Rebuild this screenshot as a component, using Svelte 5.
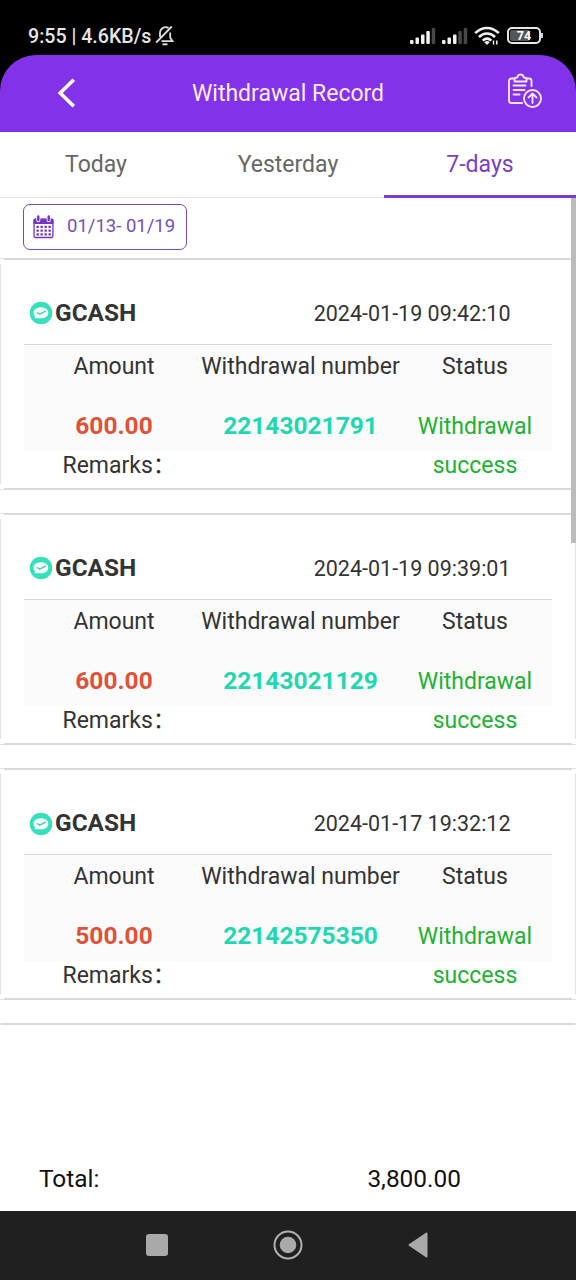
<script>
  let activeTab = '7-days';

  const tabs = ['Today', 'Yesterday', '7-days'];

  const records = [
    { date: '2024-01-19 09:42:10', amount: '600.00', number: '22143021791' },
    { date: '2024-01-19 09:39:01', amount: '600.00', number: '22143021129' },
    { date: '2024-01-17 19:32:12', amount: '500.00', number: '22142575350' }
  ];
</script>

<div class="screen">
  <div class="statusbar">
    <span class="clock">9:55 | 4.6KB/s</span>
    <svg class="bell" width="20" height="22" viewBox="0 0 20 22" fill="none" stroke="#ddd" stroke-width="1.8">
      <path d="M13.500 3C11 1 5.500 2.500 5 7.500V12M6.500 16.200h11l-2.300-3.500V7.500M1.200 17.500L16.800 1.500" />
      <path d="M7.500 19.300h5" stroke-width="2" />
    </svg>
    <div class="indicators">
      <svg width="26" height="18" viewBox="0 0 26 18" fill="#f2f2f2">
        <rect x="0" y="13" width="3.500" height="4" rx="1" />
        <rect x="5.500" y="10.500" width="3.500" height="6.500" rx="1" />
        <rect x="11" y="7.500" width="3.500" height="9.500" rx="1" />
        <rect x="16.300" y="4" width="3.500" height="13" rx="1" />
        <rect x="21.700" y="1" width="3.500" height="16" rx="1" fill="#484848" />
      </svg>
      <svg width="26" height="18" viewBox="0 0 26 18" fill="#f2f2f2">
        <rect x="0" y="13" width="3.500" height="4" rx="1" />
        <rect x="5.500" y="10.500" width="3.500" height="6.500" rx="1" />
        <rect x="11" y="7.500" width="3.500" height="9.500" rx="1" />
        <rect x="16.300" y="4" width="3.500" height="13" rx="1" fill="#484848" />
        <rect x="21.700" y="1" width="3.500" height="16" rx="1" fill="#484848" />
      </svg>
      <svg width="26" height="20" viewBox="0 0 26 20" fill="none" stroke="#f2f2f2" stroke-width="2.600">
        <path d="M1.200 7.200C8 .2 18 .2 24.800 7.200M5 11c4.500-4.600 11.500-4.600 16 0M8.700 14.600c2.600-2.400 6-2.400 8.600 0" />
        <path d="M10.200 16.200q2.800-2.400 5.600 0L13 19z" fill="#f2f2f2" stroke="none" />
        <path d="M19.500 18.500v-4M22.800 14.500v4" stroke-width="1.500" />
      </svg>
      <div class="battery"><span>74</span></div>
    </div>
  </div>

  <header class="header">
    <button class="back" aria-label="Back">
      <svg width="20" height="30" viewBox="0 0 20 30" fill="none" stroke="#fff" stroke-width="3.600">
        <path d="M17.800 1.800L4.200 15l13.600 13.200" />
      </svg>
    </button>
    <h1>Withdrawal Record</h1>
    <button class="export" aria-label="Submit record">
      <svg width="36" height="36" viewBox="0 0 36 36" fill="none" stroke="#fbe3ff" stroke-width="1.900" stroke-linecap="round" stroke-linejoin="round">
        <path d="M15 30H4.500Q2 30 2 27.500V8q0-2.500 2.500-2.500H7.500M19.500 5.500H22q2.500 0 2.500 2.500v5" />
        <path d="M7.500 8.500V6q0-1.500 2.800-1.500Q10.700 1.500 13.500 1.500t3.200 3q2.800 0 2.800 1.500v2.500z" />
        <path d="M6.500 12.500h12M6.500 17h11M6.500 21.500h6" />
        <circle cx="25.500" cy="25.500" r="8.500" />
        <path d="M25.500 30v-9M21.500 24.500l4-4 4 4" />
      </svg>
    </button>
  </header>

  <nav class="tabs">
    {#each tabs as tab}
      <button class="tab {activeTab === tab ? 'is-active' : ''}" on:click={() => (activeTab = tab)}>{tab}</button>
    {/each}
  </nav>

  <main class="content">
    <div class="filter">
      <button class="range">
        <svg width="21" height="24" viewBox="0 0 21 24">
          <path d="M2 3.500h17q1.500 0 1.500 1.500v4H.5V5q0-1.500 1.500-1.500z" fill="#7335c9" />
          <rect x="1.100" y="4.500" width="18.800" height="18" rx="1.200" fill="none" stroke="#7335c9" stroke-width="1.300" />
          <path d="M5.300 1.200v4M15.700 1.200v4" stroke="#fff" stroke-width="4" stroke-linecap="round" />
          <path d="M5.300 1.500v3.500M15.700 1.500v3.500" stroke="#7335c9" stroke-width="2.400" stroke-linecap="round" />
          <path d="M3.500 11.800h14.500M3.500 15.600h14.500M3.500 19.400h14.500" stroke="#7335c9" stroke-width="2.200" stroke-dasharray="2.300 1.700" />
        </svg>
        <span>01/13- 01/19</span>
      </button>
    </div>

    {#each records as record}
      <section class="card">
        <div class="card-head">
          <svg width="24" height="24" viewBox="0 0 24 24">
            <circle cx="12" cy="12" r="11.300" fill="#38dfbb" />
            <path d="M12 6.300c4.300 0 7.300 2.300 7.300 5.400 0 3.300-3 5.600-7.300 5.600H5.300l.8-2C5 14.300 4.500 13 4.500 11.700c0-3.100 3.200-5.400 7.500-5.400z" fill="#effffb" />
            <path d="M8 11.500l2.800 1.500 6-3" fill="none" stroke="#4fb8a0" stroke-width="1.200" />
          </svg>
          <strong>GCASH</strong>
          <time>{record.date}</time>
        </div>
        <div class="table">
          <div class="label">Amount</div>
          <div class="label">Withdrawal number</div>
          <div class="label">Status</div>
          <div class="value amount">{record.amount}</div>
          <div class="value number">{record.number}</div>
          <div class="value status">Withdrawal success</div>
        </div>
        <div class="remarks">Remarks&#xFF1A;</div>
      </section>
    {/each}
    <div class="card next"></div>
    <div class="scrollbar"></div>
  </main>

  <footer class="total">
    <span>Total:</span>
    <span class="sum">3,800.00</span>
  </footer>

  <div class="navbar">
    <svg width="22" height="22" viewBox="0 0 22 22"><rect width="22" height="22" rx="3" fill="#a9a9a9" /></svg>
    <svg width="30" height="30" viewBox="0 0 30 30">
      <circle cx="15" cy="15" r="13.500" fill="none" stroke="#b0b0b0" stroke-width="2" />
      <circle cx="15" cy="15" r="8.300" fill="#a9a9a9" />
    </svg>
    <svg width="20" height="26" viewBox="0 0 20 26"><path d="M18.500 1.500v23L1.500 13z" fill="#a9a9a9" stroke="#a9a9a9" stroke-width="2" stroke-linejoin="round" /></svg>
  </div>
</div>

<style>
  :global(body) {
    background: #000;
  }

  .screen {
    width: 576px;
    height: 1280px;
    display: flex;
    flex-direction: column;
    overflow: hidden;
    font-family: Roboto, 'Noto Sans CJK SC', sans-serif;
    color: #333;
    background: #000;
  }

  button {
    padding: 0;
    border: none;
    background: none;
    font: inherit;
    color: inherit;
  }

  svg {
    display: block;
    flex: none;
  }

  /* Status bar */
  .statusbar {
    height: 55px;
    box-sizing: border-box;
    padding: 17px 35px 0 28px;
    display: flex;
    align-items: center;
    color: #e6e6e6;
    flex: none;
  }

  .clock {
    font-size: 19.600px;
    font-weight: 500;
    white-space: nowrap;
  }

  .bell {
    margin-left: 4px;
  }

  .indicators {
    margin-left: auto;
    display: flex;
    align-items: center;
    gap: 6px;
  }

  .battery {
    width: 34px;
    height: 17px;
    box-sizing: border-box;
    border: 2px solid #e6e6e6;
    border-radius: 5px;
    margin-left: 1px;
    margin-top: -2px;
    position: relative;
    background: linear-gradient(90deg, #555 68%, #000 68%);
    background-clip: content-box;
    padding: 1px;
    text-align: center;
    font-size: 12.500px;
    font-weight: 700;
    line-height: 12px;
    color: #fff;
  }

  .battery::after {
    content: '';
    position: absolute;
    right: -4px;
    top: 4px;
    width: 2px;
    height: 5px;
    background: #ccc;
  }

  /* Header */
  .header {
    height: 77px;
    flex: none;
    display: flex;
    align-items: center;
    justify-content: space-between;
    box-sizing: border-box;
    padding: 0 33px 2px 56px;
    border-radius: 36px 36px 0 0;
    background: #8233ea;
    color: #fbeaff;
  }

  .header h1 {
    margin: 2px 7px 0 0;
    font-size: 23px;
    font-weight: 400;
  }

  .export {
    margin-top: -4px;
  }

  /* Tabs */
  .tabs {
    display: flex;
    height: 66px;
    flex: none;
    background: #fff;
  }

  .tab {
    flex: 1;
    box-sizing: border-box;
    border-bottom: 1px solid #e6e6e6;
    font-size: 23px;
    color: #666;
  }

  .tab.is-active {
    color: #7a3fc4;
    border-bottom: 3px solid #7c3bcb;
    padding-top: 2px;
  }

  /* Records */
  .content {
    flex: 1;
    min-height: 0;
    position: relative;
    background: #fff;
  }

  .filter {
    height: 59.500px;
    box-sizing: border-box;
    padding: 6px 23px;
  }

  .range {
    width: 164px;
    height: 46px;
    border: 1.500px solid #7a4bb0;
    border-radius: 7px;
    padding-left: 9px;
    display: flex;
    align-items: center;
    gap: 13px;
    font-size: 18.500px;
    color: #7650b5;
    white-space: nowrap;
  }

  .range span {
    margin-top: -2px;
  }

  /* Edges are drawn separately so that the corners stay open */
  .card {
    height: 232px;
    box-sizing: border-box;
    margin-bottom: 23.300px;
    padding: 1px 24px 0;
    background:
      linear-gradient(#dadada, #dadada) center top / calc(100% - 8px) 2px no-repeat,
      linear-gradient(#dadada, #dadada) center bottom / calc(100% - 8px) 2px no-repeat,
      linear-gradient(#e2e2e2, #e2e2e2) left center / 1px calc(100% - 12px) no-repeat,
      linear-gradient(#e2e2e2, #e2e2e2) right center / 1px calc(100% - 12px) no-repeat,
      linear-gradient(#e2e2e2, #e2e2e2) center top / 100% 1px no-repeat,
      linear-gradient(#e2e2e2, #e2e2e2) center bottom / 100% 1px no-repeat;
  }

  .card.next {
    height: 2px;
    padding: 0;
  }

  .card-head {
    height: 86px;
    box-sizing: border-box;
    padding: 24px 41.500px 0 5px;
    display: flex;
    align-items: center;
    border-bottom: 1px solid #d8d8d8;
  }

  .card-head strong {
    margin: -2px 0 0 2px;
    font-size: 24.400px;
    font-weight: 700;
  }

  .card-head time {
    margin-left: auto;
    font-size: 21.500px;
  }

  .table {
    height: 106px;
    box-sizing: border-box;
    padding: 0 3px 0 4px;
    display: grid;
    grid-template-columns: 172px 201px 148px;
    grid-template-rows: 43px 63px;
    background: #fbfbfb;
    text-align: center;
  }

  .label {
    font-size: 23px;
    line-height: 44px;
    white-space: nowrap;
  }

  .value {
    padding-top: 18px;
    font-size: 24.500px;
    font-weight: 700;
    line-height: 39px;
  }

  .amount {
    color: #df5138;
  }

  .number {
    color: #1fd8b1;
  }

  .status {
    padding: 19px 14px 0;
    font-size: 23px;
    font-weight: 400;
    color: #22b133;
  }

  .remarks {
    padding-left: 38.500px;
    font-size: 23px;
    line-height: 30px;
  }

  .scrollbar {
    position: absolute;
    top: 0;
    right: 0;
    width: 5px;
    height: 345px;
    background: #bcbcbc;
  }

  /* Total and system navigation */
  .total {
    height: 64px;
    flex: none;
    display: flex;
    align-items: center;
    box-sizing: border-box;
    padding: 0 0 2px 39px;
    background: #fff;
    color: #111;
    font-size: 24.400px;
  }

  .sum {
    margin-left: 268px;
  }

  .navbar {
    height: 69px;
    flex: none;
    box-sizing: border-box;
    padding: 0 148px 1px 146px;
    display: flex;
    align-items: center;
    justify-content: space-between;
    background: #202020;
  }
</style>
